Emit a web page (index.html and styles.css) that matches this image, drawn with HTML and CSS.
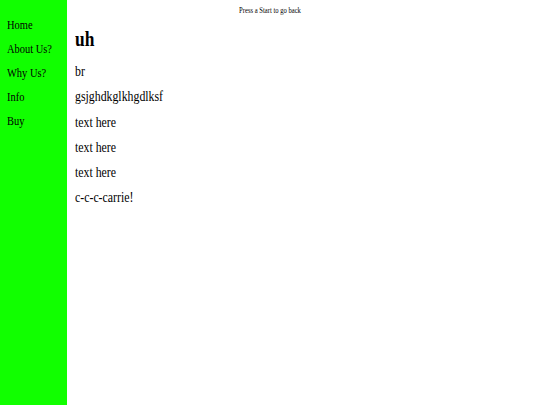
FILE: index.html
```html
<!DOCTYPE html>
<html>
<head>
<meta charset="utf-8">
<link rel="stylesheet" href="styles.css">
</head>
<body>
<div class="page">
  <nav class="sidebar">
    <a class="nav-link" href="#">Home</a>
    <a class="nav-link" href="#">About Us?</a>
    <a class="nav-link" href="#">Why Us?</a>
    <a class="nav-link" href="#">Info</a>
    <a class="nav-link" href="#">Buy</a>
  </nav>
  <div class="note">Press a Start to go back</div>
  <main class="content">
    <h1 class="title">uh</h1>
    <p class="para">br</p>
    <p class="para">gsjghdkglkhgdlksf</p>
    <p class="para">text here</p>
    <p class="para">text here</p>
    <p class="para">text here</p>
    <p class="para">c-c-c-carrie!</p>
  </main>
</div>
</body>
</html>
```
FILE: styles.css
```css
html, body {
  margin: 0;
  padding: 0;
  height: 100%;
  background: #ffffff;
  font-family: "Liberation Serif", "Times New Roman", serif;
  color: #000;
}
.page {
  display: grid;
  grid-template-columns: 67px 1fr;
  grid-template-rows: auto 1fr;
  min-height: 100%;
}
.sidebar {
  grid-column: 1;
  grid-row: 1 / -1;
  background: #11ff00;
  display: flex;
  flex-direction: column;
  gap: 8.7px;
  padding: 17.5px 0 0 7px;
  z-index: 1;
}
.nav-link {
  color: #000;
  text-decoration: none;
  font-size: 12px;
  line-height: 15.5px;
  transform: scaleX(0.87);
  transform-origin: left center;
}
.note {
  grid-column: 1 / -1;
  grid-row: 1;
  text-align: center;
  font-size: 7.6px;
  padding-top: 6px;
  line-height: 9px;
  transform: scaleX(0.87);
  transform-origin: center;
}
.content {
  grid-column: 2;
  grid-row: 2;
  padding: 0 0 0 8px;
}
.title {
  font-size: 20px;
  font-weight: bold;
  margin: 13px 0 13px;
  line-height: 23px;
  transform: scaleX(0.87);
  transform-origin: left center;
}
.para {
  font-size: 13.6px;
  line-height: 15.5px;
  margin: 0 0 9.8px;
  transform: scaleX(0.87);
  transform-origin: left center;
}
```
